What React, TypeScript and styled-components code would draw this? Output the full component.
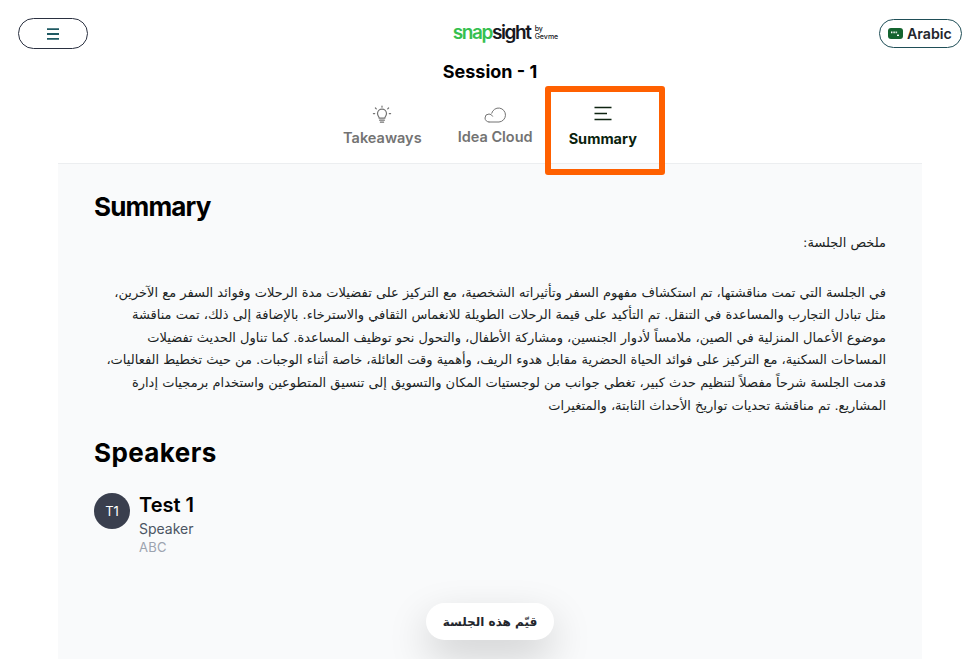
import React from 'react';
import styled, { createGlobalStyle } from 'styled-components';

const GlobalStyle = createGlobalStyle`
  html, body {
    margin: 0;
    padding: 0;
    height: 100%;
    overflow: hidden;
    background: #fff;
    font-family: Inter, "Liberation Sans", sans-serif;
    color: #000;
  }
`;

const Page = styled.div`
  position: relative;
  height: 659px;
  overflow: hidden;
  display: flex;
  flex-direction: column;
`;

const Header = styled.header`
  display: flex;
  align-items: flex-start;
  justify-content: space-between;
  padding: 18px 18px 0;
  height: 42px;
`;

const MenuButton = styled.button`
  width: 70px;
  height: 31px;
  padding: 0;
  background: #fff;
  border: 1px solid #2a3040;
  border-radius: 16px;
  display: flex;
  align-items: center;
  justify-content: center;
`;

const Logo = styled.div`
  display: flex;
  align-items: flex-start;
  margin: 5px 0 0 44px;
  font-size: 19px;
  line-height: 20px;
  letter-spacing: -1.4px;
  font-weight: 600;
  color: #16181d;
`;

const LogoGreen = styled.span`
  color: #35c04f;
`;

const LogoBy = styled.span`
  display: flex;
  flex-direction: column;
  margin: 2px 0 0 4px;
  font-size: 7px;
  line-height: 8px;
  letter-spacing: 0;
  font-weight: 500;
`;

const LangButton = styled.button`
  width: 83px;
  height: 29px;
  margin: 1px 0 0;
  padding: 0 0 0 8px;
  background: #fff;
  border: 1px solid #1f4e57;
  border-radius: 15px;
  display: flex;
  align-items: center;
  gap: 4px;
  font-family: Inter, sans-serif;
  font-size: 14.2px;
  font-weight: 600;
  color: #23262d;
`;

const Title = styled.h1`
  margin: 0;
  text-align: center;
  font-size: 18px;
  line-height: 24px;
  font-weight: 700;
`;

const Tabs = styled.nav`
  display: flex;
  justify-content: center;
  gap: 36px;
  height: 79px;
`;

const Tab = styled.div<{ $active?: boolean }>`
  box-sizing: border-box;
  display: flex;
  flex-direction: column;
  align-items: center;
  padding-top: 21px;
  height: 80px;
  font-size: 14.5px;
  line-height: 20px;
  font-weight: ${p => (p.$active ? 700 : 600)};
  color: ${p => (p.$active ? '#0a1f0d' : '#737373')};
  border-bottom: ${p => (p.$active ? '1px solid #3fae4f' : 'none')};
`;

const TabLabel = styled.span<{ $drop: number }>`
  margin-top: ${p => p.$drop}px;
  white-space: nowrap;
`;

const Panel = styled.main`
  flex: 1;
  margin: 0 58px;
  padding: 26px 36px 0;
  background: #f9fafb;
  border-top: 1px solid #eceef0;
`;

const Heading = styled.h2<{ $tracking: number }>`
  margin: 0;
  font-size: 26px;
  line-height: 34px;
  font-weight: 700;
  letter-spacing: ${p => p.$tracking}px;
`;

const SummaryText = styled.div`
  direction: rtl;
  margin-top: 8px;
  font-family: "DejaVu Sans", sans-serif;
  font-size: 13px;
  line-height: 22.6px;
  color: #1b1f24;
`;

const TextLine = styled.div<{ $gap?: boolean }>`
  white-space: nowrap;
  margin-bottom: ${p => (p.$gap ? '27px' : '0')};
`;

const SpeakersHeading = styled(Heading)`
  margin-top: 19px;
`;

const Speaker = styled.div`
  display: flex;
  gap: 9px;
  margin-top: 23px;
`;

const Avatar = styled.div`
  width: 36px;
  height: 36px;
  border-radius: 50%;
  background: #3a3f4e;
  color: #fff;
  font-size: 13px;
  display: flex;
  align-items: center;
  justify-content: center;
`;

const SpeakerName = styled.div`
  font-size: 20px;
  line-height: 24px;
  font-weight: 600;
`;

const SpeakerRole = styled.div`
  margin-top: 3px;
  font-size: 14px;
  line-height: 18px;
  color: #4b5563;
`;

const SpeakerOrg = styled.div`
  font-size: 13px;
  line-height: 18px;
  letter-spacing: 0.3px;
  color: #9ca3af;
`;

const RateButton = styled.button`
  position: absolute;
  left: 426px;
  top: 603px;
  width: 128px;
  height: 37px;
  padding: 0;
  border: none;
  border-radius: 19px;
  background: #fff;
  box-shadow: 0 16px 40px rgba(0, 0, 0, 0.18);
  direction: rtl;
  font-family: "DejaVu Sans", sans-serif;
  font-size: 12px;
  font-weight: 600;
  color: #23262d;
`;

const Highlight = styled.div`
  position: absolute;
  left: 545px;
  top: 86px;
  width: 108px;
  height: 77px;
  border: 6px solid #ff6000;
  border-radius: 3px;
  pointer-events: none;
`;

const lines = [
  'في الجلسة التي تمت مناقشتها، تم استكشاف مفهوم السفر وتأثيراته الشخصية، مع التركيز على تفضيلات مدة الرحلات وفوائد السفر مع الآخرين،',
  'مثل تبادل التجارب والمساعدة في التنقل. تم التأكيد على قيمة الرحلات الطويلة للانغماس الثقافي والاسترخاء. بالإضافة إلى ذلك، تمت مناقشة',
  'موضوع الأعمال المنزلية في الصين، ملامساً لأدوار الجنسين، ومشاركة الأطفال، والتحول نحو توظيف المساعدة. كما تناول الحديث تفضيلات',
  'المساحات السكنية، مع التركيز على فوائد الحياة الحضرية مقابل هدوء الريف، وأهمية وقت العائلة، خاصة أثناء الوجبات. من حيث تخطيط الفعاليات،',
  'قدمت الجلسة شرحاً مفصلاً لتنظيم حدث كبير، تغطي جوانب من لوجستيات المكان والتسويق إلى تنسيق المتطوعين واستخدام برمجيات إدارة',
  'المشاريع. تم مناقشة تحديات تواريخ الأحداث الثابتة، والمتغيرات',
];

const MenuIcon = () => (
  <svg width="14" height="12" viewBox="0 0 14 12" fill="none" stroke="#1f5a63" strokeWidth="1.8">
    <path d="M1 1.2h12M1 6h12M1 10.8h12" />
  </svg>
);

const BulbIcon = () => (
  <svg width="20" height="20" viewBox="0 0 20 20" fill="none" stroke="#737373" strokeWidth="1.2" strokeLinecap="round">
    <path d="M7.2 13.2c0-1.4-1.7-2.2-1.7-4.6a4.5 4.5 0 0 1 9 0c0 2.4-1.7 3.2-1.7 4.6z" />
    <path d="M7.6 15.2h4.8M8.4 17.2h3.2" />
    <path d="M10 1v1.2M3.4 3l.9.9M16.6 3l-.9.9M1.4 8.6h1.3M17.3 8.6h1.3" />
  </svg>
);

const CloudIcon = () => (
  <svg width="22" height="20" viewBox="0 0 22 20" fill="none" stroke="#737373" strokeWidth="1" strokeLinecap="round">
    <path d="M5 17h10a7 7 0 1 0-7.3-8.8" />
    <path d="M5 17a4 4 0 0 1 0-8 4 4 0 0 1 3.6 2.2" />
  </svg>
);

const LinesIcon = () => (
  <svg width="20" height="20" viewBox="0 0 20 20" fill="none" stroke="#0f2412" strokeWidth="1.3">
    <path d="M1.5 2.5h17M1.5 8.5h12.5M1.5 14.5h17" />
  </svg>
);

const FlagIcon = () => (
  <svg width="15" height="11" viewBox="0 0 15 11">
    <rect width="15" height="11" rx="3" fill="#14642f" />
    <path d="M3 4.4h6.5" stroke="#fff" strokeWidth="1.6" strokeDasharray="1 .6" />
    <rect x="9" y="6.6" width="2" height="1.4" fill="#fff" />
  </svg>
);

export default function App() {
  return (
    <Page>
      <GlobalStyle />
      <Header>
        <MenuButton aria-label="Menu">
          <MenuIcon />
        </MenuButton>
        <Logo>
          <LogoGreen>snap</LogoGreen>sight
          <LogoBy>
            <span>by</span>
            <span>Gevme</span>
          </LogoBy>
        </Logo>
        <LangButton>
          <FlagIcon />
          Arabic
        </LangButton>
      </Header>
      <Title>Session - 1</Title>
      <Tabs>
        <Tab>
          <BulbIcon />
          <TabLabel $drop={3}>Takeaways</TabLabel>
        </Tab>
        <Tab>
          <CloudIcon />
          <TabLabel $drop={2}>Idea Cloud</TabLabel>
        </Tab>
        <Tab $active>
          <LinesIcon />
          <TabLabel $drop={4}>Summary</TabLabel>
        </Tab>
      </Tabs>
      <Panel>
        <Heading $tracking={-0.85}>Summary</Heading>
        <SummaryText>
          <TextLine $gap>ملخص الجلسة:</TextLine>
          {lines.map(line => (
            <TextLine key={line}>{line}</TextLine>
          ))}
        </SummaryText>
        <SpeakersHeading $tracking={0.4}>Speakers</SpeakersHeading>
        <Speaker>
          <Avatar>T1</Avatar>
          <div>
            <SpeakerName>Test 1</SpeakerName>
            <SpeakerRole>Speaker</SpeakerRole>
            <SpeakerOrg>ABC</SpeakerOrg>
          </div>
        </Speaker>
      </Panel>
      <RateButton>قيّم هذه الجلسة</RateButton>
      <Highlight />
    </Page>
  );
}
